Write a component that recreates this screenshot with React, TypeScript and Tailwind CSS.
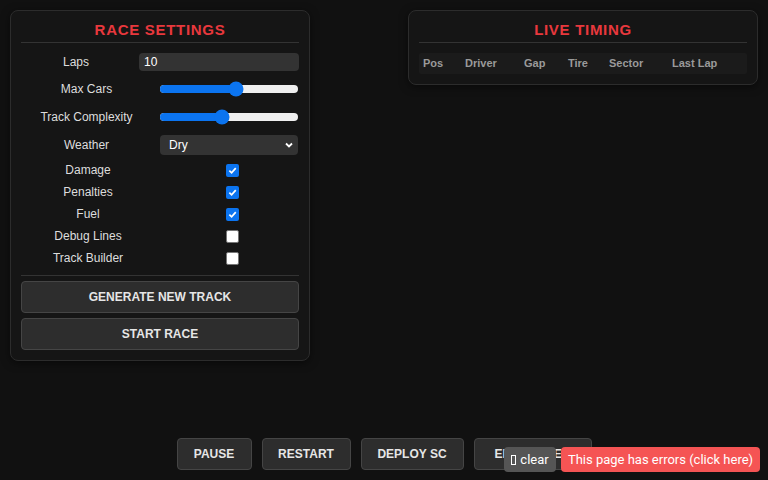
import React from "react";

const font = { fontFamily: '"Liberation Sans", Arial, sans-serif' };

function Panel({ title, className, children }: { title: string; className: string; children: React.ReactNode }) {
  return (
    <div className={"rounded-[8px] border border-[#2c2c2c] bg-[#151515] p-[10px] shadow-[0_2px_8px_rgba(0,0,0,0.5)] " + className}>
      <h2 className="h-[21px] text-center text-[15px] font-bold leading-[17px] tracking-[0.7px] text-[#e8383d]">{title}</h2>
      <div className="h-px bg-[#333]" />
      {children}
    </div>
  );
}

function SliderRow({ label, pct }: { label: string; pct: number }) {
  return (
    <div className="flex h-[20px] items-center">
      <span className="w-[131px] text-center text-[12px] text-[#ddd]">{label}</span>
      <div className="ml-[8px] flex w-[138px] items-center">
        <div className="relative h-[8px] w-full rounded-full bg-[#efefef]">
          <div className="h-full rounded-full bg-[#0b74f0]" style={{ width: pct + "%" }} />
          <div
            className="absolute top-1/2 h-[15px] w-[15px] -translate-x-1/2 -translate-y-1/2 rounded-full bg-[#0b74f0]"
            style={{ left: pct + "%" }}
          />
        </div>
      </div>
    </div>
  );
}

function CheckRow({ label, checked }: { label: string; checked: boolean }) {
  return (
    <div className="flex h-[16px] items-center">
      <span className="w-[134px] text-center text-[12px] text-[#ddd]">{label}</span>
      <div className="ml-[11px] flex flex-1 justify-center">
        {checked ? (
          <span className="flex h-[13px] w-[13px] items-center justify-center rounded-[2px] bg-[#0b74f0]">
            <svg width="9" height="9" viewBox="0 0 10 10">
              <path d="M1.5 5.2 L4 7.6 L8.6 2.4" stroke="white" strokeWidth="1.9" fill="none" />
            </svg>
          </span>
        ) : (
          <span className="h-[13px] w-[13px] rounded-[2px] border border-[#767676] bg-white" />
        )}
      </div>
    </div>
  );
}

function Btn({ children, className = "" }: { children: React.ReactNode; className?: string }) {
  return (
    <button className={"h-[32px] rounded-[4px] border border-[#454545] bg-[#2d2d2d] text-[12px] font-bold text-[#e6e6e6] " + className}>
      {children}
    </button>
  );
}

export default function App() {
  const cols = ["Pos", "Driver", "Gap", "Tire", "Sector", "Last Lap"];
  const colW = ["w-[42px]", "w-[59px]", "w-[44px]", "w-[41px]", "w-[63px]", "w-[60px]"];
  return (
    <div className="relative h-[480px] w-[768px] overflow-hidden bg-[#111111]" style={font}>
      <div className="flex items-start justify-between px-[10px] pt-[10px]">
        <Panel title="RACE SETTINGS" className="w-[300px]">
          <div className="mt-[10px] flex flex-col">
            <div className="flex h-[18px] items-center">
              <span className="flex-1 text-center text-[12px] text-[#ddd]">Laps</span>
              <div className="ml-[8px] flex h-[18px] w-[160px] items-center rounded-[4px] bg-[#333] px-[5px] text-[12px] text-white">10</div>
            </div>
            <div className="mt-[8px] flex flex-col gap-[8px]">
              <SliderRow label="Max Cars" pct={55} />
              <SliderRow label="Track Complexity" pct={45} />
              <div className="flex h-[20px] items-center">
                <span className="w-[131px] text-center text-[12px] text-[#ddd]">Weather</span>
                <div className="ml-[8px] flex h-[20px] w-[138px] items-center justify-between rounded-[4px] bg-[#333] pl-[9px] pr-[4px] text-[12px] text-white">
                  <span>Dry</span>
                  <svg width="10" height="10" viewBox="0 0 10 10">
                    <path d="M2 3.5 L5 6.5 L8 3.5" stroke="white" strokeWidth="1.8" fill="none" />
                  </svg>
                </div>
              </div>
            </div>
            <div className="mt-[7px] flex flex-col gap-[6px]">
              <CheckRow label="Damage" checked />
              <CheckRow label="Penalties" checked />
              <CheckRow label="Fuel" checked />
              <CheckRow label="Debug Lines" checked={false} />
              <CheckRow label="Track Builder" checked={false} />
            </div>
            <div className="mt-[9px] h-px bg-[#333]" />
            <div className="mt-[5px] flex flex-col gap-[5px]">
              <Btn className="w-full">GENERATE NEW TRACK</Btn>
              <Btn className="w-full">START RACE</Btn>
            </div>
          </div>
        </Panel>
        <Panel title="LIVE TIMING" className="w-[350px]">
          <div className="mt-[10px] flex h-[21px] items-center rounded-[2px] bg-[#1b1b1b] px-[4px] text-[11px] font-bold text-[#9a9a9a]">
            {cols.map((c, i) => (
              <span key={c} className={colW[i]}>{c}</span>
            ))}
          </div>
        </Panel>
      </div>

      <div className="absolute bottom-[10px] left-0 right-0 flex justify-center gap-[10px]">
        <Btn className="w-[75px]">PAUSE</Btn>
        <Btn className="w-[89px]">RESTART</Btn>
        <Btn className="w-[103px]">DEPLOY SC</Btn>
        <Btn className="w-[118px]">EDIT DRIVER</Btn>
      </div>

      <div className="fixed bottom-[8px] right-[8px] flex items-center gap-[5px] text-[13px]" style={{ fontFamily: 'Roboto, "Liberation Sans", sans-serif' }}>
        <span className="flex h-[25px] w-[52px] items-center justify-center gap-[4px] rounded-[4px] bg-[#555] text-white">
          <span className="inline-block h-[10px] w-[5px] border border-white" />
          clear
        </span>
        <span className="flex h-[25px] w-[199px] items-center justify-center rounded-[4px] bg-[#f55454] text-white">This page has errors (click here)</span>
      </div>
    </div>
  );
}
